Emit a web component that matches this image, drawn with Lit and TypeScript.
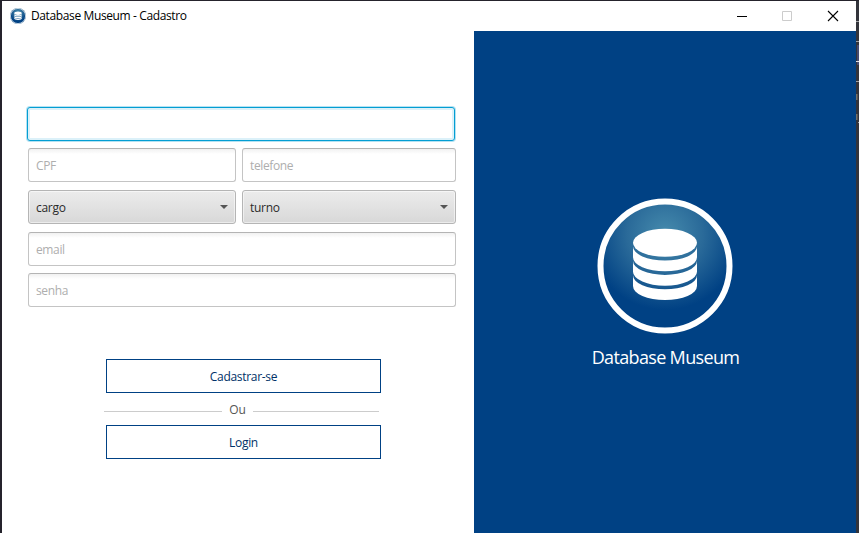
import { LitElement, html, css, svg } from "lit";
import { customElement, property } from "lit/decorators.js";

const base = css`
  * { box-sizing: border-box; }
  .t { display: inline-block; white-space: pre; }
`;

@customElement("db-logo")
class DbLogo extends LitElement {
  static styles = css`
    :host { display: block; flex: none; }
    svg { display: block; width: 100%; height: 100%; }
  `;
  render() {
    const bands = [0, 14.4, 28.8];
    return html`<svg viewBox="0 0 136 136">
      <defs>
        <radialGradient id="g" gradientUnits="userSpaceOnUse" cx="68" cy="36" r="76">
          <stop offset="0" stop-color="#468bad" />
          <stop offset="0.5" stop-color="#2a6a99" />
          <stop offset="1" stop-color="#004184" />
        </radialGradient>
      </defs>
      <circle cx="68" cy="68" r="64.5" fill="url(#g)" stroke="#fff" stroke-width="6" />
      <ellipse cx="68" cy="44.8" rx="32" ry="14" fill="#fff" />
      ${bands.map((y) => svg`<path fill="#fff" transform="translate(0 ${y})"
        d="M36 48.5A32 14 0 0 0 100 48.5V59.3A32 14 0 0 1 36 59.3Z" />`)}
    </svg>`;
  }
}

@customElement("form-field")
class FormField extends LitElement {
  @property() placeholder = "";
  static styles = [base, css`
    :host { display: block; min-width: 0; }
    .box { height: 34px; padding: 2px 7px 0; display: flex; align-items: center; color: #aeaeae;
      border: 1px solid #c4c4c4; border-top-color: #b4b4b4; border-radius: 3px; letter-spacing: -.38px;
      background: linear-gradient(#f1f1f1, #fff 5px); }
    :host([focused]) .box { border-color: #039ed3; background: #fff;
      box-shadow: 0 0 0 1px #b5e2f2, inset 0 0 0 2px #dcf1f9; }
  `];
  render() {
    return html`<div class="box"><span class="t">${this.placeholder}</span></div>`;
  }
}

@customElement("combo-box")
class ComboBox extends LitElement {
  @property() label = "";
  static styles = [base, css`
    :host { display: block; min-width: 0; }
    .box { height: 34px; padding: 2px 7px 0; display: flex; align-items: center; justify-content: space-between;
      color: #2b2b2b; border: 1px solid #b5b5b5; border-radius: 3px; letter-spacing: -.3px;
      background: linear-gradient(#ececec, #d8d8d8); box-shadow: inset 0 0 0 1px #ffffff80; }
    svg { width: 8px; height: 4px; margin-top: -2px; }
  `];
  render() {
    return html`<div class="box"><span class="t">${this.label}</span>
      <svg viewBox="0 0 8 4"><path d="M0 0H8L4 4Z" fill="#555" /></svg></div>`;
  }
}

@customElement("app-root")
class AppRoot extends LitElement {
  static styles = [base, css`
    :host { display: flex; width: 859px; height: 533px; overflow: hidden; background: #25232c;
      font: 12px/16px "Open Sans", "Noto Sans", sans-serif; padding: 1px 0 0 2px; box-sizing: border-box; }
    .window { width: 854px; height: 532px; background: #fff; display: flex; flex-direction: column; flex: none; }
    .edge { width: 3px; height: 532px; background: #33343b; display: block; }
    .bar { height: 30px; flex: none; display: flex; align-items: center; padding: 0 17px 0 8px; color: #000; }
    .bar db-logo { width: 16px; height: 16px; margin-right: 5px; border-radius: 50%; background: #2a6290; }
    .title { letter-spacing: -.38px; flex: 1; }
    .controls { display: flex; }
    .controls svg { width: 12px; height: 12px; display: block; }
    .controls svg + svg { margin-left: 33px; }
    .controls svg + svg + svg { margin-left: 34px; }
    .body { flex: 1; display: flex; min-height: 0; }
    .left { width: 472px; padding: 76px 18px 0 26px; }
    .first { margin: 0 1px 7px -1px; }
    .pair { display: grid; grid-template-columns: 208px 214px; gap: 6px; margin-bottom: 8px; }
    .email { margin-bottom: 7px; }
    .actions { margin: 52px 0 0 78px; width: 275px; }
    .btn { height: 34px; width: 275px; border: 1px solid #004184; background: #fff; color: #003168;
      display: flex; align-items: center; justify-content: center; padding-top: 2px; letter-spacing: -.3px; }
    .or { display: flex; align-items: center; height: 32px; margin-left: -2px; width: 275px; color: #555; }
    .or i { height: 1px; background: #ccc; margin-top: 5px; }
    .l1 { width: 118px; } .l2 { width: 126px; }
    .or span { width: 31px; text-align: center; padding-top: 2px; }
    .right { width: 382px; background: #004184; display: flex; flex-direction: column; align-items: center; padding-top: 167px; }
    .right db-logo { width: 136px; height: 136px; }
    .name { color: #fff; font-size: 18px; line-height: 24px; margin-top: 11px; letter-spacing: -.66px; white-space: nowrap; padding-left: 1px; }
  `];
  render() {
    return html`<div class="window">
      <header class="bar">
        <db-logo></db-logo><span class="title">Database Museum - Cadastro</span>
        <div class="controls">
          <svg viewBox="0 0 12 12"><path d="M1 6.5H11" stroke="#000" /></svg>
          <svg viewBox="0 0 12 12"><path d="M1.5 1.5H10.5V10.5H1.5Z" stroke="#ccc" fill="none" /></svg>
          <svg viewBox="0 0 12 12"><path d="M1 1L11 11M11 1L1 11" stroke="#000" stroke-width="1.1" /></svg>
        </div>
      </header>
      <main class="body">
        <section class="left">
          <form-field class="first" focused></form-field>
          <div class="pair"><form-field placeholder="CPF"></form-field><form-field placeholder="telefone"></form-field></div>
          <div class="pair"><combo-box label="cargo"></combo-box><combo-box label="turno"></combo-box></div>
          <form-field class="email" placeholder="email"></form-field>
          <form-field placeholder="senha"></form-field>
          <div class="actions">
            <div class="btn">Cadastrar-se</div>
            <div class="or"><i class="l1"></i><span>Ou</span><i class="l2"></i></div>
            <div class="btn">Login</div>
          </div>
        </section>
        <aside class="right"><db-logo></db-logo><div class="name">Database Museum</div></aside>
      </main>
    </div>
    <svg class="edge" viewBox="0 0 3 532">
      <path d="M1 44H3V64H1Z" fill="#454b70" />
      <path d="M0 20.5H3M0 40.5H3M0 80.5H3M2 121.5H3" stroke="#a0a1a5" />
      <path d="M0 60.5H3" stroke="#e0e0e4" />
      <path d="M0 93H1.5V99H0ZM0 113H1.5V119H0Z" fill="#777066" />
    </svg>`;
  }
}
